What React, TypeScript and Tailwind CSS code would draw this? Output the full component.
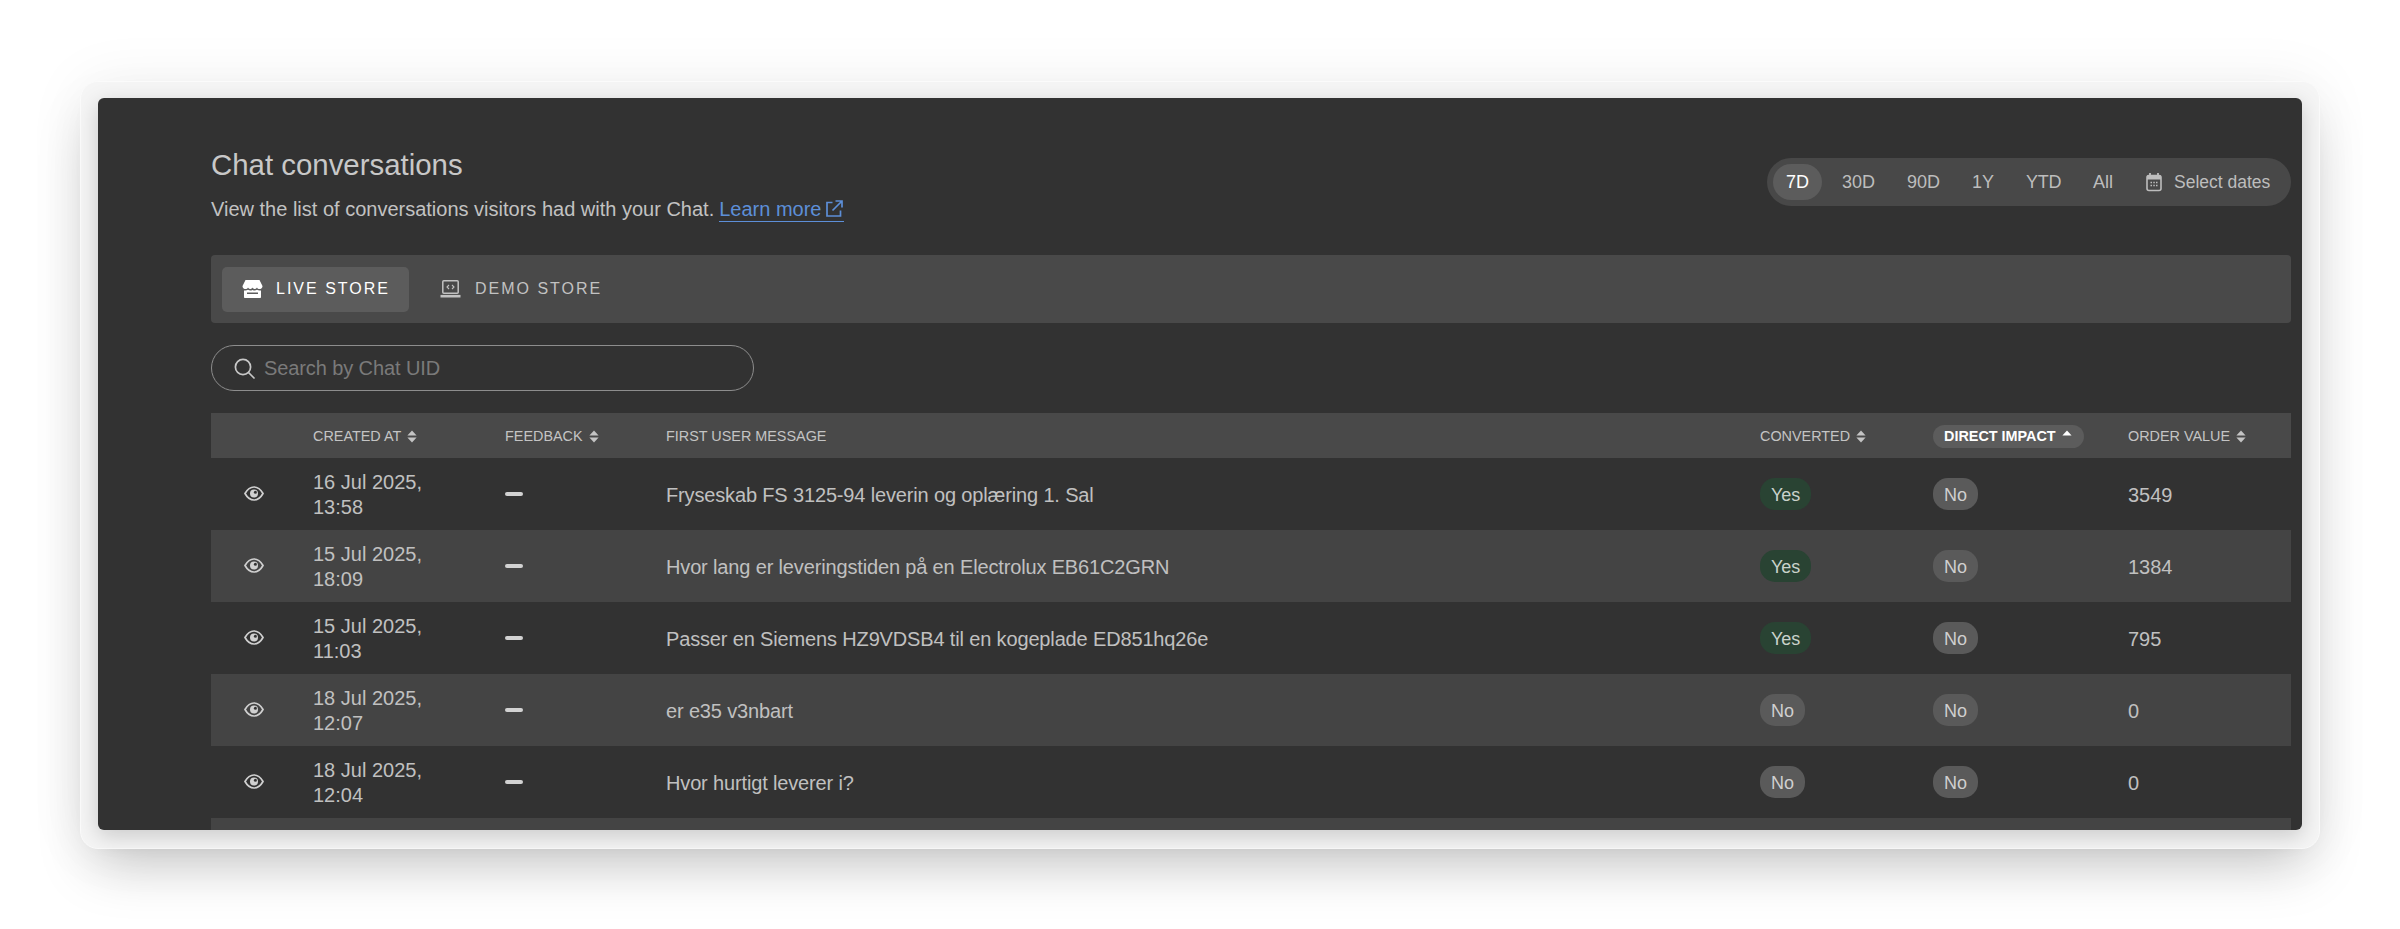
import React from "react";

const rows = [
  { d: "16 Jul 2025,", t: "13:58", m: "Fryseskab FS 3125-94 leverin og oplæring 1. Sal", c: true, v: "3549" },
  { d: "15 Jul 2025,", t: "18:09", m: "Hvor lang er leveringstiden på en Electrolux EB61C2GRN", c: true, v: "1384" },
  { d: "15 Jul 2025,", t: "11:03", m: "Passer en Siemens HZ9VDSB4 til en kogeplade ED851hq26e", c: true, v: "795" },
  { d: "18 Jul 2025,", t: "12:07", m: "er e35 v3nbart", c: false, v: "0" },
  { d: "18 Jul 2025,", t: "12:04", m: "Hvor hurtigt leverer i?", c: false, v: "0" },
];

const cols = "grid grid-cols-[102px_192px_161px_1094px_173px_195px_163px] items-center";

function Sort({ up }: { up?: boolean }) {
  return (
    <svg width="10" height="13" viewBox="0 0 10 13" className="shrink-0" fill="currentColor">
      <path d="M5 0.5 L9.6 5.4 H0.4 Z" />
      {!up && <path d="M5 12.5 L9.6 7.6 H0.4 Z" />}
    </svg>
  );
}

function Eye() {
  return (
    <svg width="20" height="15" viewBox="0 0 20 15" fill="none" stroke="#d0d0d0" strokeWidth="1.7" className="-translate-y-[1px]">
      <path d="M1 7.5 C3.5 3 6.5 1 10 1 C13.5 1 16.5 3 19 7.5 C16.5 12 13.5 14 10 14 C6.5 14 3.5 12 1 7.5 Z" />
      <circle cx="10" cy="7.5" r="4" fill="#d0d0d0" stroke="none" />
      <circle cx="11.4" cy="6.2" r="1.5" fill="#323232" stroke="none" />
    </svg>
  );
}

function Badge({ yes }: { yes: boolean }) {
  return (
    <span
      className={
        "inline-flex h-[32px] items-center justify-center rounded-[15px] px-[11px] pt-[1px] text-[18px] leading-none " +
        (yes ? "bg-[#294333] text-[#c9d2cb]" : "bg-[#5a5a5a] text-[#cfcfcf]")
      }
    >
      {yes ? "Yes" : "No"}
    </span>
  );
}

export default function App() {
  return (
    <div className="h-[929px] w-[2400px] overflow-hidden bg-white pl-[80px] pt-[81px] font-['Liberation_Sans',Arial,sans-serif]">
      <div className="h-[768px] w-[2240px] rounded-[18px] border border-[#fbfbfb] bg-[#f5f5f5] py-[16px] pl-[17px] pr-[17px] shadow-[0_28px_56px_-14px_rgba(0,0,0,0.22),0_0_60px_rgba(0,0,0,0.06)]">
        <div className="h-[732px] w-[2204px] overflow-hidden rounded-[6px] bg-[#323232] pl-[113px] pr-[11px] text-[#c6c6c6] shadow-[0_6px_22px_rgba(0,0,0,0.18)]">
          <div className="flex h-[157px] items-start justify-between">
            <div className="pt-[50px]">
              <h1 className="text-[29.4px] leading-[34px] font-normal text-[#c8c8c8]">Chat conversations</h1>
              <p className="mt-[14px] flex items-center text-[20px] leading-[26px] text-[#c2c2c2]">
                <span>View the list of conversations visitors had with your Chat.</span>
                <a className="ml-[5px] flex items-center border-b border-[#5d8fd8] leading-[24px] text-[#5d8fd8]">
                  Learn more
                  <svg width="19" height="19" viewBox="0 0 19 19" fill="none" stroke="#5d8fd8" strokeWidth="1.7" className="ml-[4px]">
                    <path d="M7.5 3.5 H2 V17 H15.5 V11.5" />
                    <path d="M7.5 11.5 L17 2 M10.5 2 H17 V8.5" />
                  </svg>
                </a>
              </p>
            </div>
            <div className="mt-[60px] flex h-[48px] w-[524px] items-center rounded-[24px] bg-[#484848] pl-[6px] text-[18px] text-[#bdbdbd]">
              <span className="flex h-[36px] w-[49px] items-center justify-center rounded-[18px] bg-[#5c5c5c] font-medium text-white">7D</span>
              <span className="ml-[20px] w-[31px] text-center">30D</span>
              <span className="ml-[34px] w-[31px] text-center">90D</span>
              <span className="ml-[34px] w-[21px] text-center">1Y</span>
              <span className="ml-[33px] w-[33px] text-center tracking-[-0.3px]">YTD</span>
              <span className="ml-[34px] w-[19px] text-center">All</span>
              <svg width="16" height="20" viewBox="0 0 16 20" fill="none" className="ml-[34px]">
                <rect x="1" y="3.5" width="14" height="15" rx="2" stroke="#bdbdbd" strokeWidth="1.6" />
                <rect x="1" y="3.5" width="14" height="4" fill="#bdbdbd" />
                <path d="M4 1 V4 M12 1 V4" stroke="#bdbdbd" strokeWidth="1.8" />
                <path d="M4.5 10.5 H6 M7.3 10.5 H8.8 M10 10.5 H11.5 M4.5 13.5 H6 M7.3 13.5 H8.8 M10 13.5 H11.5" stroke="#bdbdbd" strokeWidth="1.5" />
              </svg>
              <span className="ml-[12px] text-[17.5px]">Select dates</span>
            </div>
          </div>

          <div className="flex h-[68px] items-center gap-[12px] rounded-[4px] bg-[#494949] pl-[11px] text-[16px] font-medium tracking-[2px]">
            <div className="flex h-[45px] w-[187px] items-center gap-[13px] rounded-[5px] bg-[#5c5c5c] pl-[20px] text-white">
              <svg width="21" height="20" viewBox="0 0 21 20" fill="#ffffff">
                <path d="M3.5 1 H17.5 L20.5 7 C20.5 9.6 18.4 10 17.6 10 C16.4 10 15.4 9.4 15 8.4 C14.4 9.4 13.2 10 12.4 10 C11.6 10 11 9.6 10.5 8.6 C10 9.6 9.4 10 8.6 10 C7.8 10 6.6 9.4 6 8.4 C5.6 9.4 4.6 10 3.4 10 C2.6 10 0.5 9.6 0.5 7 Z" />
                <path d="M2 11.4 C3.6 11.8 5 11.4 6 10.8 C7.4 11.8 9 11.8 10.5 10.9 C12 11.8 13.6 11.8 15 10.8 C16 11.4 17.4 11.8 19 11.4 V18 C19 18.6 18.6 19 18 19 H3 C2.4 19 2 18.6 2 18 Z M5 13.5 V15 H16 V13.5 Z" fillRule="evenodd" />
              </svg>
              <span>LIVE STORE</span>
            </div>
            <div className="flex h-[45px] items-center gap-[14px] pl-[19px] text-[#c2c2c2]">
              <svg width="21" height="20" viewBox="0 0 21 20" fill="none" stroke="#c2c2c2" strokeWidth="1.5">
                <rect x="2.8" y="1.8" width="15.4" height="12.4" rx="1" />
                <path d="M0.5 17.2 H20.5" strokeWidth="2.6" />
                <path d="M9 6 L7 8 L9 10 M12 6 L14 8 L12 10" strokeWidth="1.1" />
              </svg>
              <span>DEMO STORE</span>
            </div>
          </div>

          <div className="mt-[22px] flex h-[46px] w-[543px] items-center gap-[9px] rounded-[23px] border border-[#8d8d8d] pl-[22px]">
            <svg width="21" height="21" viewBox="0 0 21 21" fill="none" stroke="#c8c8c8" strokeWidth="1.7">
              <circle cx="9" cy="9" r="7.6" />
              <path d="M14.5 14.5 L20 20" strokeLinecap="round" />
            </svg>
            <span className="text-[20px] tracking-[-0.1px] text-[#7a7a7a]">Search by Chat UID</span>
          </div>

          <div className={cols + " mt-[22px] h-[45px] bg-[#494949] pt-[2px] text-[14.4px] text-[#c4c4c4]"}>
            <div />
            <div className="flex items-center gap-[6px]">CREATED AT <Sort /></div>
            <div className="flex items-center gap-[6px]">FEEDBACK <Sort /></div>
            <div>FIRST USER MESSAGE</div>
            <div className="flex items-center gap-[6px]">CONVERTED <Sort /></div>
            <div>
              <span className="inline-flex h-[23px] w-[151px] items-center gap-[6px] rounded-[12px] bg-[#5c5c5c] pl-[11px] font-bold text-white"><span className="text-[14.4px]">DIRECT IMPACT</span> <Sort up /></span>
            </div>
            <div className="flex items-center gap-[6px]">ORDER VALUE <Sort /></div>
          </div>

          {rows.map((r, i) => (
            <div key={i} className={cols + " h-[72px] text-[20px] leading-[25px] text-[#c0c0c0] " + (i % 2 === 1 ? "bg-[#444444]" : "")}>
              <div className="flex justify-center pr-[16px]"><Eye /></div>
              <div className="pt-[2px]">{r.d}<br />{r.t}</div>
              <div><div className="h-[4px] w-[18px] rounded-full bg-[#d2d2d2]" /></div>
              <div className="pt-[2px] tracking-[-0.15px]">{r.m}</div>
              <div><Badge yes={r.c} /></div>
              <div><Badge yes={false} /></div>
              <div className="pt-[2px]">{r.v}</div>
            </div>
          ))}
          <div className="h-[72px] bg-[#444444]" />
        </div>
      </div>
    </div>
  );
}
